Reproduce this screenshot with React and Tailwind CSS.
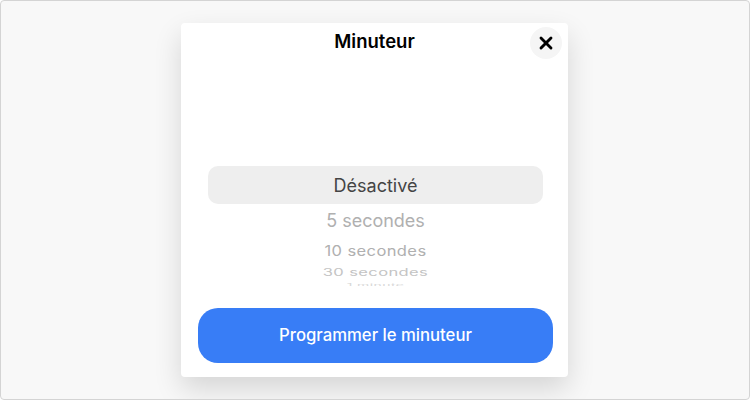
import React from 'react';
import { X } from 'lucide-react';

// wheel rows below the selected one, squashed more the further they are
const rows = [
  { label: '5 secondes', className: 'h-[34px] text-[18px] text-[#b0b0b0]' },
  { label: '10 secondes', className: 'h-[26px] text-[16.5px] tracking-[0.4px] text-[#b0b0b0] [&>span]:scale-y-[0.85]' },
  { label: '30 secondes', className: 'h-[16px] text-[16.5px] tracking-[0.4px] text-[#c4c4c4] [&>span]:scale-y-[0.6]' },
  { label: '1 minute', className: 'h-[12px] text-[14px] tracking-[0.4px] text-[#d8d8d8] [&>span]:scale-y-[0.3]' },
];

export default function App() {
  return (
    <div className="w-[750px] h-[400px] flex items-center justify-center bg-[#f8f8f8] border border-[#d4d4d4] rounded-[4px] font-['Inter',sans-serif] overflow-hidden">
      <div className="relative mr-[1px] w-[387px] h-[354px] flex flex-col bg-white rounded-[4px] shadow-[0_12px_28px_rgba(0,0,0,0.14)]">
        <div className="h-[37px] pt-[1px] flex items-center justify-center text-[18.5px] font-semibold text-black">Minuteur</div>

        <button className="absolute top-[4px] right-[6px] w-[32px] h-[32px] flex items-center justify-center rounded-full bg-[#f5f5f5] text-black">
          <X size={20} strokeWidth={3.4} />
        </button>

        <div className="mt-[106px] ml-[27px] w-[335px] h-[120px] overflow-hidden">
          <div className="h-[38px] flex items-center justify-center rounded-[10px] bg-[#eeeeee] text-[18px] text-[#444444]">Désactivé</div>
          {rows.map((row) => (
            <div key={row.label} className={`flex items-center justify-center ${row.className}`}>
              <span className="block leading-none">{row.label}</span>
            </div>
          ))}
        </div>

        <button className="mt-[22px] ml-[17px] w-[355px] h-[55px] pt-[1px] flex items-center justify-center rounded-[20px] bg-[#387df6] text-white text-[16.7px] font-medium">
          Programmer le minuteur
        </button>
      </div>
    </div>
  );
}
